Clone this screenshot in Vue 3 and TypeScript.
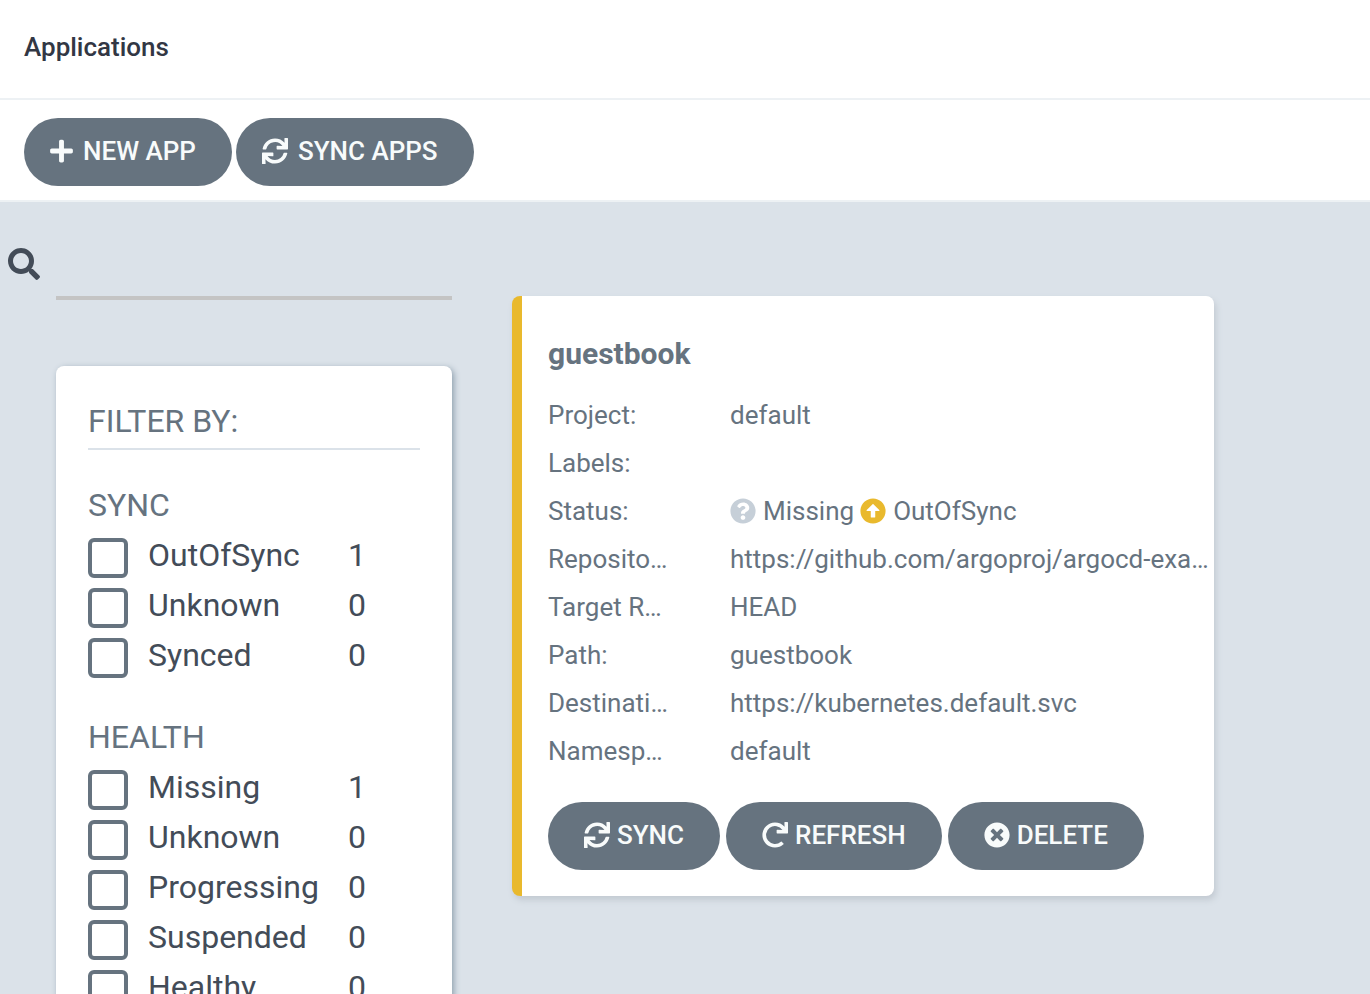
<script setup lang="ts">
import { ref } from 'vue'

interface Option {
  label: string
  count: number
}

interface Group {
  title: string
  options: Option[]
}

interface Field {
  label: string
  value: string
}

const icons = {
  plus: 'M416 208H272V64c0-17.67-14.33-32-32-32h-32c-17.67 0-32 14.33-32 32v144H32c-17.67 0-32 14.33-32 32v32c0 17.67 14.33 32 32 32h144v144c0 17.67 14.33 32 32 32h32c17.67 0 32-14.33 32-32V304h144c17.67 0 32-14.33 32-32v-32c0-17.67-14.33-32-32-32z',
  sync: 'M440.65 12.57l4 82.77A247.16 247.16 0 0 0 255.83 8C134.73 8 33.91 94.92 12.29 209.82A12 12 0 0 0 24.09 224h49.05a12 12 0 0 0 11.67-9.26 175.91 175.91 0 0 1 317-56.94l-101.46-4.86a12 12 0 0 0-12.57 12v47.41a12 12 0 0 0 12 12H500a12 12 0 0 0 12-12V12a12 12 0 0 0-12-12h-47.37a12 12 0 0 0-11.98 12.57zM255.83 432a175.61 175.61 0 0 1-146-77.8l101.8 4.87a12 12 0 0 0 12.57-12v-47.4a12 12 0 0 0-12-12H12a12 12 0 0 0-12 12V500a12 12 0 0 0 12 12h47.35a12 12 0 0 0 12-12.6l-4.15-82.57A247.17 247.17 0 0 0 255.83 504c121.11 0 221.93-86.92 243.55-201.82a12 12 0 0 0-11.8-14.18h-49.05a12 12 0 0 0-11.67 9.26A175.86 175.86 0 0 1 255.83 432z',
  redo: 'M500.33 0h-47.41a12 12 0 0 0-12 12.57l4 82.76A247.42 247.42 0 0 0 256 8C119.34 8 7.9 119.53 8 256.19 8.1 393.07 119.1 504 256 504a247.1 247.1 0 0 0 166.18-63.91 12 12 0 0 0 .48-17.43l-34-34a12 12 0 0 0-16.38-.55A176 176 0 1 1 402.1 157.8l-101.53-4.87a12 12 0 0 0-12.57 12v47.41a12 12 0 0 0 12 12h200.33a12 12 0 0 0 12-12V12a12 12 0 0 0-12-12z',
  times: 'M256 8C119 8 8 119 8 256s111 248 248 248 248-111 248-248S393 8 256 8zm121.6 313.1c4.7 4.7 4.7 12.3 0 17L338 377.6c-4.7 4.7-12.3 4.7-17 0L256 312l-65.1 65.6c-4.7 4.7-12.3 4.7-17 0L134.4 338c-4.7-4.7-4.7-12.3 0-17l65.6-65-65.6-65.1c-4.7-4.7-4.7-12.3 0-17l39.6-39.6c4.7-4.7 12.3-4.7 17 0l65 65.7 65.1-65.6c4.7-4.7 12.3-4.7 17 0l39.6 39.6c4.7 4.7 4.7 12.3 0 17L312 256l65.6 65.1z',
  question: 'M504 256c0 136.997-111.043 248-248 248S8 392.997 8 256C8 119.083 119.043 8 256 8s248 111.083 248 248zM262.655 90c-54.497 0-89.255 22.957-116.549 63.758-3.536 5.286-2.353 12.415 2.715 16.258l34.699 26.31c5.205 3.947 12.621 3.008 16.665-2.122 17.864-22.658 30.113-35.797 57.303-35.797 20.429 0 45.698 13.148 45.698 32.958 0 14.976-12.363 22.667-32.534 33.976C247.128 238.528 216 254.941 216 296v4c0 6.627 5.373 12 12 12h56c6.627 0 12-5.373 12-12v-1.333c0-28.462 83.186-29.647 83.186-106.667 0-58.002-60.165-102-116.531-102zM256 338c-25.365 0-46 20.635-46 46 0 25.364 20.635 46 46 46s46-20.636 46-46c0-25.365-20.635-46-46-46z',
  arrowUp: 'M8 256C8 119 119 8 256 8s248 111 248 248-111 248-248 248S8 393 8 256zm292 116V256h70.9c10.7 0 16.1-13 8.5-20.5L264.5 121.2c-4.7-4.7-12.2-4.7-16.9 0l-115 114.3c-7.6 7.6-2.2 20.5 8.5 20.5H212v116c0 6.6 5.4 12 12 12h64c6.6 0 12-5.4 12-12z',
  search: 'M505 442.7L405.3 343c-4.5-4.5-10.6-7-17-7H372c27.6-35.3 44-79.7 44-128C416 93.1 322.9 0 208 0S0 93.1 0 208s93.1 208 208 208c48.3 0 92.7-16.4 128-44v16.3c0 6.4 2.5 12.5 7 17l99.7 99.7c9.4 9.4 24.6 9.4 33.9 0l28.3-28.3c9.4-9.4 9.4-24.6.1-34zM208 336c-70.7 0-128-57.2-128-128 0-70.7 57.2-128 128-128 70.7 0 128 57.2 128 128 0 70.7-57.2 128-128 128z',
}

const query = ref('')
const selected = ref<string[]>([])

const groups: Group[] = [
  {
    title: 'SYNC',
    options: [
      { label: 'OutOfSync', count: 1 },
      { label: 'Unknown', count: 0 },
      { label: 'Synced', count: 0 },
    ],
  },
  {
    title: 'HEALTH',
    options: [
      { label: 'Missing', count: 1 },
      { label: 'Unknown', count: 0 },
      { label: 'Progressing', count: 0 },
      { label: 'Suspended', count: 0 },
      { label: 'Healthy', count: 0 },
    ],
  },
]

const fields: Field[] = [
  { label: 'Project:', value: 'default' },
  { label: 'Labels:', value: '' },
  { label: 'Status:', value: '' },
  { label: 'Repository:', value: 'https://github.com/argoproj/argocd-example-apps.git' },
  { label: 'Target Revision:', value: 'HEAD' },
  { label: 'Path:', value: 'guestbook' },
  { label: 'Destination:', value: 'https://kubernetes.default.svc' },
  { label: 'Namespace:', value: 'default' },
]

const actions = [
  { label: 'SYNC', icon: icons.sync },
  { label: 'REFRESH', icon: icons.redo },
  { label: 'DELETE', icon: icons.times },
]
</script>

<template>
  <div class="page">
    <header class="header">
      <h1 class="title">Applications</h1>
    </header>
    <div class="toolbar">
      <button class="btn btn-lead" type="button">
        <svg class="icon plus" viewBox="0 0 448 512" aria-hidden="true"><path :d="icons.plus" /></svg>
        NEW APP
      </button>
      <button class="btn btn-lead" type="button">
        <svg class="icon" viewBox="0 0 512 512" aria-hidden="true"><path :d="icons.sync" /></svg>
        SYNC APPS
      </button>
    </div>

    <main class="content">
      <aside class="sidebar">
        <div class="search">
          <label class="search-label" for="app-search" aria-label="Search applications">
            <svg class="search-icon" viewBox="0 0 512 512" aria-hidden="true"><path :d="icons.search" /></svg>
          </label>
          <input id="app-search" v-model="query" class="search-input" type="text" />
        </div>
        <div class="filters">
          <h2 class="filters-title">FILTER BY:</h2>
          <section v-for="group in groups" :key="group.title" class="group">
            <h3 class="group-title">{{ group.title }}</h3>
            <div v-for="option in group.options" :key="option.label" class="option">
              <input
                :id="`${group.title}-${option.label}`"
                v-model="selected"
                class="box"
                type="checkbox"
                :value="`${group.title}-${option.label}`"
              />
              <label class="option-label" :for="`${group.title}-${option.label}`">{{ option.label }}</label>
              <span class="count">{{ option.count }}</span>
            </div>
          </section>
        </div>
      </aside>

      <article class="card">
        <h2 class="card-title">guestbook</h2>
        <dl class="fields">
          <div v-for="field in fields" :key="field.label" class="field">
            <dt class="field-label">{{ field.label }}</dt>
            <dd v-if="field.label === 'Status:'" class="field-value statuses">
              <span class="status">
                <svg class="icon missing" viewBox="0 0 512 512" aria-hidden="true"><path :d="icons.question" /></svg>
                Missing
              </span>
              <span class="status">
                <svg class="icon outofsync" viewBox="0 0 512 512" aria-hidden="true"><path :d="icons.arrowUp" /></svg>
                OutOfSync
              </span>
            </dd>
            <dd v-else class="field-value">{{ field.value }}</dd>
          </div>
        </dl>
        <div class="actions">
          <button v-for="action in actions" :key="action.label" class="btn" type="button">
            <svg class="icon" viewBox="0 0 512 512" aria-hidden="true"><path :d="action.icon" /></svg>
            {{ action.label }}
          </button>
        </div>
      </article>
    </main>
  </div>
</template>

<style>
body {
  margin: 0;
}
</style>

<style scoped>
.page {
  display: flex;
  flex-direction: column;
  height: 100vh;
  background: #dbe2e9;
  color: #66737f;
  font-family: Roboto, "Liberation Sans", sans-serif;
  font-size: 26px;
}

.page *,
.page {
  box-sizing: border-box;
}

h1,
h2,
h3,
dl,
dd {
  margin: 0;
}

.header {
  flex: none;
  padding: 24px;
  background: #fff;
  border-bottom: 2px solid #edf1f4;
}

.title {
  padding-bottom: 4px;
  color: #323744;
  font-size: 26px;
  font-weight: 500;
  line-height: 46px;
}

.toolbar {
  display: flex;
  flex: none;
  gap: 4px;
  padding: 18px 24px 14px;
  background: #fff;
  border-bottom: 2px solid #edf1f4;
}

.btn {
  display: flex;
  align-items: center;
  gap: 7px;
  padding: 0 36px 2px;
  border: 0;
  border-radius: 34px;
  background: #66737f;
  color: #f8fbfb;
  font-family: inherit;
  font-size: 26px;
  font-weight: 500;
  line-height: 66px;
  white-space: nowrap;
  cursor: pointer;
}

.btn-lead {
  gap: 10px;
  padding-left: 26px;
}

.icon {
  flex: none;
  width: 26px;
  height: 26px;
  fill: currentColor;
}

.plus {
  width: 23px;
}

.content {
  display: flex;
  flex: 1;
  align-items: flex-start;
  gap: 60px;
  min-height: 0;
  overflow-y: auto;
  scrollbar-width: none;
}

.sidebar {
  flex: none;
  width: 452px;
  padding-bottom: 32px;
}

.search {
  display: flex;
  gap: 16px;
  padding: 26px 0 0 8px;
}

.search-label {
  display: flex;
  padding-top: 20px;
}

.search-icon {
  width: 32px;
  height: 32px;
  fill: #434c58;
}

.search-input {
  flex: 1;
  min-width: 0;
  height: 72px;
  padding: 0;
  border: 0;
  border-bottom: 4px solid #c4c4c4;
  outline: 0;
  background: transparent;
  color: #434c58;
  font: inherit;
}

.filters {
  margin: 66px 0 0 56px;
  padding: 32px 32px 40px;
  border-radius: 8px;
  background: #fff;
  box-shadow: 2px 2px 6px #8fa0ae;
}

.filters-title {
  margin-bottom: 2px;
  padding-bottom: 4px;
  border-bottom: 2px solid #dbe2e9;
  font-size: 32px;
  font-weight: 400;
  line-height: 46px;
}

.group {
  padding-top: 30px;
}

.group-title {
  margin-bottom: 6px;
  font-size: 32px;
  font-weight: 400;
  line-height: 46px;
}

.option {
  display: flex;
  gap: 20px;
  height: 50px;
  padding-top: 4px;
  color: #434c58;
  font-size: 32px;
  line-height: 34px;
}

.box {
  flex: none;
  width: 40px;
  height: 40px;
  margin: 0;
  border: 4px solid #66737f;
  border-radius: 6px;
  appearance: none;
  background: #fff;
}

.box:checked {
  box-shadow: inset 0 0 0 6px #fff;
  background: #66737f;
}

.option-label {
  width: 180px;
}

.card {
  flex: 1;
  min-width: 0;
  max-width: 702px;
  margin-top: 94px;
  padding: 34px 0 26px 26px;
  border-left: 10px solid #e9b92d;
  border-radius: 8px;
  background: #fff;
  box-shadow: 2px 4px 6px #c3cad2;
}

.card-title {
  margin-bottom: 13px;
  font-size: 30px;
  font-weight: 700;
  line-height: 48px;
}

.field {
  display: flex;
  gap: 60px;
  line-height: 48px;
}

.field-label {
  flex: none;
  width: 122px;
}

.field-label,
.field-value {
  overflow: hidden;
  text-overflow: ellipsis;
  white-space: nowrap;
}

.field-value {
  flex: 1;
  min-width: 0;
  margin-right: 4px;
}

.statuses {
  display: flex;
  gap: 6px;
}

.status {
  display: flex;
  align-items: center;
  gap: 7px;
}

.missing {
  fill: #c6cfd8;
}

.outofsync {
  fill: #e9b92d;
}

.actions {
  display: flex;
  gap: 6px;
  margin-top: 27px;
}
</style>
